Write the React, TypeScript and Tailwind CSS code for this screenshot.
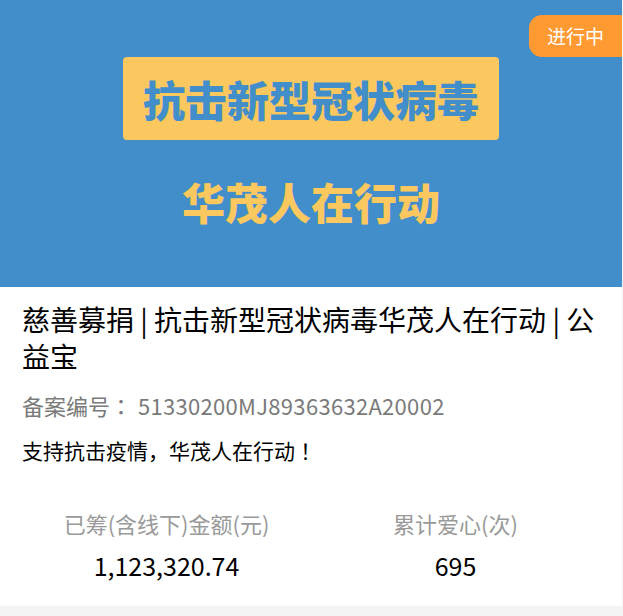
import React from "react";

const font = { fontFamily: '"Noto Sans CJK SC", "Noto Sans", sans-serif' };
// centred full-width punctuation, as in the reference
const punct = { fontFamily: '"Noto Sans CJK JP", sans-serif' };

function Banner() {
  return (
    <div className="relative flex h-[287px] flex-col items-center bg-[#428eca]">
      <div className="absolute right-0 top-[15px] flex h-[42px] w-[93px] items-center justify-center rounded-l-[13px] bg-[#ff9a33] text-[19px] text-white">
        进行中
      </div>
      <div className="mt-[57px] flex h-[83px] w-[376px] items-center justify-center rounded-[4px] bg-[#fbc85f]">
        <span className="text-[42px] font-black leading-none text-[#428eca]">抗击新型冠状病毒</span>
      </div>
      <div className="mt-[40px] text-[43px] font-black leading-none text-[#fbc85f]">华茂人在行动</div>
    </div>
  );
}

function Stat({ label, value }: { label: string; value: string }) {
  return (
    <div className="flex flex-col items-center">
      <div className="text-[22px] leading-[30px] text-[#999999]">{label}</div>
      <div className="mt-[10px] text-[25px] leading-[34px] text-black">{value}</div>
    </div>
  );
}

export default function App() {
  return (
    <div className="min-h-[616px] bg-[#f4f4f4]" style={font}>
      <div className="w-[622px] bg-white">
        <Banner />
        <div className="px-[22px] pb-[24px] pt-[14px]">
          <h1 className="text-[28px] font-normal leading-[37px] text-black">
            慈善募捐 | 抗击新型冠状病毒华茂人在行动 | 公益宝
          </h1>
          <p className="mt-[15px] text-[22px] leading-[30px] text-[#7a7a7a]">
            备案编号<span style={punct}>：</span>
            <span className="ml-[6px] tracking-[0.3px]">51330200MJ89363632A20002</span>
          </p>
          <p className="mt-[16px] text-[21px] leading-[28px] text-black">
            支持抗击疫情<span style={punct}>，</span>华茂人在行动<span style={punct}>！</span>
          </p>
          <div className="mt-[44px] grid grid-cols-2">
            <Stat label="已筹(含线下)金额(元)" value="1,123,320.74" />
            <Stat label="累计爱心(次)" value="695" />
          </div>
        </div>
      </div>
    </div>
  );
}
